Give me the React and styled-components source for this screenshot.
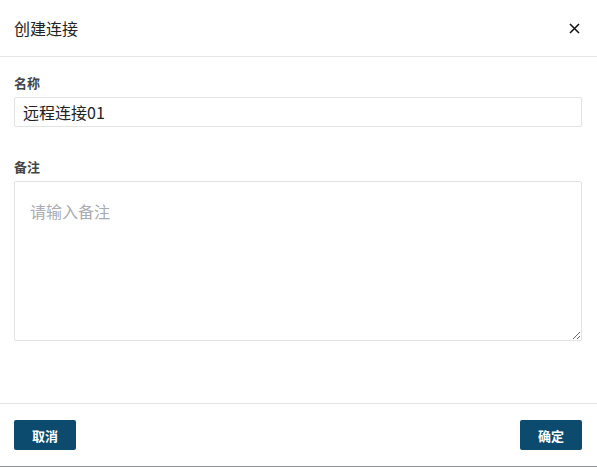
import styled, { createGlobalStyle } from 'styled-components'

const GlobalStyle = createGlobalStyle`
  html, body {
    margin: 0;
    padding: 0;
    background: #fff;
  }
  body {
    font-family: "Microsoft YaHei", "Noto Sans CJK SC", "Liberation Sans", sans-serif;
  }
  * { box-sizing: border-box; }
`

const Dialog = styled.div`
  width: 597px;
  height: 467px;
  display: flex;
  flex-direction: column;
  background: #fff;
  border-bottom: 1px solid #8e9194;
`

const Header = styled.div`
  height: 57px;
  display: flex;
  align-items: center;
  justify-content: space-between;
  padding: 0 16px 0 14px;
  border-bottom: 1px solid #e6e6e6;
`

const Title = styled.h3`
  margin: 0;
  font-size: 16px;
  font-weight: 400;
  color: #222;
`

const CloseButton = styled.button`
  border: none;
  background: none;
  padding: 0;
  width: 14px;
  height: 14px;
  display: flex;
  align-items: center;
  justify-content: center;
  cursor: pointer;
`

const Body = styled.div`
  flex: 1;
  padding: 18px 15px 0 14px;
  display: flex;
  flex-direction: column;
`

const Field = styled.div`
  display: flex;
  flex-direction: column;
  margin-bottom: ${p => p.$gap || 0}px;
`

const Label = styled.label`
  font-size: 13px;
  font-weight: 700;
  color: #444;
  line-height: 16px;
  margin-bottom: 6px;
`

const Input = styled.input`
  height: 30px;
  border: 1px solid #e3e3e3;
  border-radius: 2px;
  padding: 0 8px;
  font-family: inherit;
  font-size: 16px;
  color: #222;
  outline: none;
`

const TextArea = styled.textarea`
  height: 160px;
  border: 1px solid #e3e3e3;
  border-radius: 2px;
  padding: 18px 15px;
  font-family: inherit;
  font-size: 16px;
  line-height: 22px;
  color: #222;
  outline: none;

  &::placeholder {
    color: #a9abb0;
  }
`

const Footer = styled.div`
  height: 63px;
  border-top: 1px solid #e6e6e6;
  display: flex;
  align-items: flex-start;
  justify-content: space-between;
  padding: 16px 15px 0 14px;
`

const Button = styled.button`
  height: 30px;
  min-width: 62px;
  padding: 0 14px;
  border: none;
  border-radius: 2px;
  background: #0d4b6e;
  color: #fff;
  font-family: inherit;
  font-size: 13px;
  font-weight: 700;
  cursor: pointer;
`

export default function App() {
  return (
    <>
      <GlobalStyle />
      <Dialog>
        <Header>
          <Title>创建连接</Title>
          <CloseButton aria-label="关闭">
            <svg width="11" height="11" viewBox="0 0 11 11">
              <path d="M1 1 L10 10 M10 1 L1 10" stroke="#111" strokeWidth="1.5" />
            </svg>
          </CloseButton>
        </Header>
        <Body>
          <Field $gap={32}>
            <Label>名称</Label>
            <Input defaultValue="远程连接01" />
          </Field>
          <Field>
            <Label>备注</Label>
            <TextArea placeholder="请输入备注" />
          </Field>
        </Body>
        <Footer>
          <Button>取消</Button>
          <Button>确定</Button>
        </Footer>
      </Dialog>
    </>
  )
}
